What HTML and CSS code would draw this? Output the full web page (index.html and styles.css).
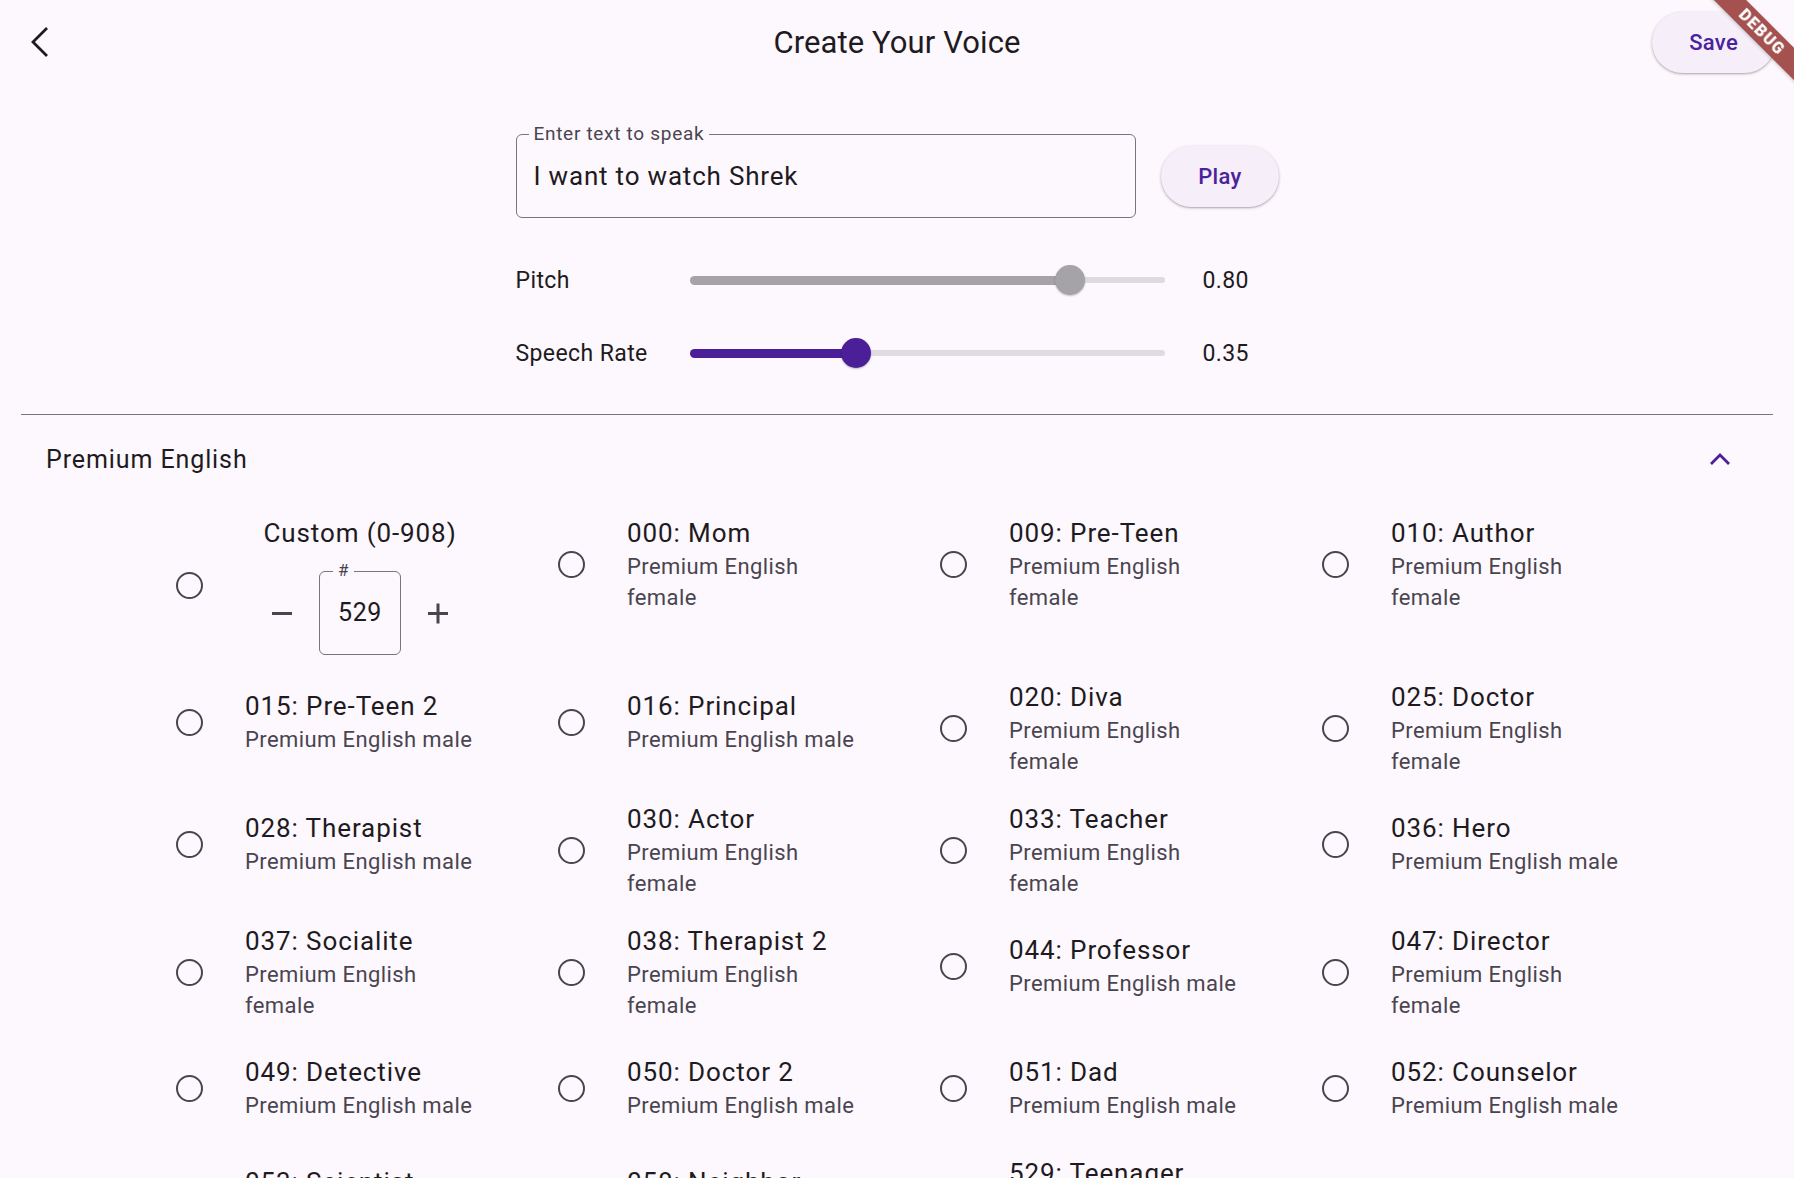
FILE: index.html
```html
<!DOCTYPE html>
<html lang="en">
  <head>
    <meta charset="UTF-8" />
    <meta name="viewport" content="width=device-width, initial-scale=1.0" />
    <title>Create Your Voice</title>
    <link rel="stylesheet" href="styles.css">
  </head>

  <body>
    <header class="appbar">
      <button class="back" aria-label="Back">
        <svg width="20" height="32" viewBox="0 0 20 32">
          <polyline points="17,2 3,16 17,30" fill="none" stroke="#1d1b20" stroke-width="2.8" />
        </svg>
      </button>
      <h1>Create Your Voice</h1>
      <div class="appbar-end">
        <button class="pill">Save</button>
      </div>
    </header>

    <div class="form">
      <div class="speak-row">
        <div class="field">
          <span class="field-label">Enter text to speak</span>
          <span class="field-value">I want to watch Shrek</span>
        </div>
        <button class="pill">Play</button>
      </div>

      <div class="slider-row">
        <span class="slider-label">Pitch</span>
        <div class="slider off">
          <div class="track">
            <div class="fill" style="width: 80%"></div>
            <div class="thumb" style="left: 80%"></div>
          </div>
        </div>
        <span class="slider-value">0.80</span>
      </div>
      <div class="slider-row">
        <span class="slider-label">Speech Rate</span>
        <div class="slider">
          <div class="track">
            <div class="fill" style="width: 35%"></div>
            <div class="thumb" style="left: 35%"></div>
          </div>
        </div>
        <span class="slider-value">0.35</span>
      </div>
    </div>

    <section class="panel">
      <div class="panel-head">
        <span>Premium English</span>
        <svg width="22" height="14" viewBox="0 0 22 14">
          <polyline points="2,12 11,3 20,12" fill="none" stroke="#4a1f98" stroke-width="2.8" />
        </svg>
      </div>

      <div class="voices">
        <div class="tile">
          <span class="radio"></span>
          <div class="custom">
            <span class="title">Custom (0-908)</span>
            <div class="stepper">
              <svg class="step" width="48" height="48" viewBox="0 0 48 48">
                <path d="M14 24.5H34" stroke="#49454f" stroke-width="3" />
              </svg>
              <div class="num">
                <span class="num-label">#</span>
                529
              </div>
              <svg class="step" width="48" height="48" viewBox="0 0 48 48">
                <path d="M14 24.5H34M24 14.5V34.5" stroke="#49454f" stroke-width="3" />
              </svg>
            </div>
          </div>
        </div>
        <div class="tile"><span class="radio"></span><div class="text"><span class="title">000: Mom</span><span class="sub">Premium English female</span></div></div>
        <div class="tile"><span class="radio"></span><div class="text"><span class="title">009: Pre-Teen</span><span class="sub">Premium English female</span></div></div>
        <div class="tile"><span class="radio"></span><div class="text"><span class="title">010: Author</span><span class="sub">Premium English female</span></div></div>

        <div class="tile"><span class="radio"></span><div class="text"><span class="title">015: Pre-Teen 2</span><span class="sub">Premium English male</span></div></div>
        <div class="tile"><span class="radio"></span><div class="text"><span class="title">016: Principal</span><span class="sub">Premium English male</span></div></div>
        <div class="tile"><span class="radio"></span><div class="text"><span class="title">020: Diva</span><span class="sub">Premium English female</span></div></div>
        <div class="tile"><span class="radio"></span><div class="text"><span class="title">025: Doctor</span><span class="sub">Premium English female</span></div></div>

        <div class="tile"><span class="radio"></span><div class="text"><span class="title">028: Therapist</span><span class="sub">Premium English male</span></div></div>
        <div class="tile"><span class="radio"></span><div class="text"><span class="title">030: Actor</span><span class="sub">Premium English female</span></div></div>
        <div class="tile"><span class="radio"></span><div class="text"><span class="title">033: Teacher</span><span class="sub">Premium English female</span></div></div>
        <div class="tile"><span class="radio"></span><div class="text"><span class="title">036: Hero</span><span class="sub">Premium English male</span></div></div>

        <div class="tile"><span class="radio"></span><div class="text"><span class="title">037: Socialite</span><span class="sub">Premium English female</span></div></div>
        <div class="tile"><span class="radio"></span><div class="text"><span class="title">038: Therapist 2</span><span class="sub">Premium English female</span></div></div>
        <div class="tile"><span class="radio"></span><div class="text"><span class="title">044: Professor</span><span class="sub">Premium English male</span></div></div>
        <div class="tile"><span class="radio"></span><div class="text"><span class="title">047: Director</span><span class="sub">Premium English female</span></div></div>

        <div class="tile"><span class="radio"></span><div class="text"><span class="title">049: Detective</span><span class="sub">Premium English male</span></div></div>
        <div class="tile"><span class="radio"></span><div class="text"><span class="title">050: Doctor 2</span><span class="sub">Premium English male</span></div></div>
        <div class="tile"><span class="radio"></span><div class="text"><span class="title">051: Dad</span><span class="sub">Premium English male</span></div></div>
        <div class="tile"><span class="radio"></span><div class="text"><span class="title">052: Counselor</span><span class="sub">Premium English male</span></div></div>

        <div class="tile"><span class="radio"></span><div class="text"><span class="title">053: Scientist</span><span class="sub">Premium English male</span></div></div>
        <div class="tile"><span class="radio"></span><div class="text"><span class="title">058: Neighbor</span><span class="sub">Premium English male</span></div></div>
        <div class="tile"><span class="radio"></span><div class="text"><span class="title">529: Teenager</span><span class="sub">Premium English female</span></div></div>
      </div>
    </section>

    <div class="debug">DEBUG</div>
  </body>
</html>
```

FILE: styles.css
```css
html,
body {
  margin: 0;
  overflow: hidden;
}

body {
  background: #fdf7fe;
  color: #1d1b20;
  font-family: Roboto, "Noto Sans", sans-serif;
}

button {
  font-family: inherit;
  border: 0;
  background: none;
  padding: 0;
  cursor: pointer;
}

/* top bar */
.appbar {
  height: 84px;
  display: grid;
  grid-template-columns: 1fr auto 1fr;
  align-items: center;
}

.back {
  margin-left: 30px;
  width: 20px;
  height: 32px;
  display: flex;
}

.appbar h1 {
  margin: 0;
  font-size: 31px;
  font-weight: 400;
  letter-spacing: 0.1px;
}

.appbar-end {
  display: flex;
  justify-content: flex-end;
  padding-right: 19px;
}

.pill {
  height: 61px;
  padding: 0 37px;
  border-radius: 31px;
  background: #f6eff9;
  color: #4a239c;
  font-size: 22px;
  font-weight: 500;
  letter-spacing: 0.3px;
  box-shadow: 0 1px 3px rgba(0, 0, 0, 0.28), 0 1px 1px rgba(0, 0, 0, 0.08);
}

/* text + sliders */
.form {
  width: 763px;
  margin: 50px auto 0;
}

.speak-row {
  display: flex;
  align-items: center;
  gap: 25px;
}

.field {
  position: relative;
  flex: 1;
  height: 84px;
  box-sizing: border-box;
  border: 1.5px solid #79747e;
  border-radius: 6px;
  display: flex;
  align-items: center;
  padding-left: 17px;
}

.field-label {
  position: absolute;
  top: -13px;
  left: 12px;
  padding: 0 5px;
  background: #fdf7fe;
  font-size: 19px;
  letter-spacing: 0.7px;
  color: #49454f;
}

.field-value {
  font-size: 26px;
  letter-spacing: 0.8px;
}

.slider-row {
  display: flex;
  align-items: center;
  height: 48px;
  margin-top: 25px;
}

.speak-row + .slider-row {
  margin-top: 38px;
}

.slider-label {
  width: 174px;
  font-size: 23px;
  letter-spacing: 0.4px;
}

.slider {
  flex: 1;
}

.track {
  position: relative;
  height: 6px;
  border-radius: 3px;
  background: #e0dbe3;
  display: flex;
  align-items: center;
}

.fill {
  height: 9px;
  border-radius: 5px;
  background: #4a1f98;
}

.thumb {
  position: absolute;
  top: 50%;
  width: 30px;
  height: 30px;
  margin: -15px 0 0 -15px;
  border-radius: 50%;
  background: #4a1f98;
  box-shadow: 0 1px 2px rgba(0, 0, 0, 0.25);
}

.off .track {
  background: #dedbe0;
}

.off .fill,
.off .thumb {
  background: #a5a2a8;
}

.slider-value {
  width: 76px;
  padding-left: 38px;
  font-size: 23px;
  letter-spacing: 0.4px;
}

/* voice list */
.panel {
  margin: 37px 21px 0;
  border-top: 1.5px solid #79747e;
}

.panel-head {
  height: 88px;
  display: flex;
  align-items: center;
  justify-content: space-between;
  padding: 0 42px 0 25px;
  font-size: 25px;
  letter-spacing: 0.9px;
}

.voices {
  display: grid;
  grid-template-columns: repeat(4, 382px);
  justify-content: center;
  align-items: start;
}

.tile {
  min-height: 110px;
  box-sizing: border-box;
  padding: 12.5px 36px 12.5px 28px;
  display: flex;
  align-items: center;
}

.radio {
  flex: none;
  width: 56px;
  height: 56px;
  margin-right: 28px;
  display: flex;
  align-items: center;
  justify-content: center;
}

.radio::before {
  content: "";
  width: 23px;
  height: 23px;
  border: 2.8px solid #49454f;
  border-radius: 50%;
}

.text {
  display: flex;
  flex-direction: column;
  max-width: 236px;
}

.title {
  font-size: 26px;
  line-height: 35px;
  letter-spacing: 0.9px;
}

.sub {
  font-size: 22px;
  line-height: 31px;
  letter-spacing: 0.4px;
  color: #49454f;
}

.custom {
  width: 230px;
  display: flex;
  flex-direction: column;
  align-items: center;
}

.stepper {
  margin-top: 20px;
  display: flex;
  align-items: center;
  gap: 13px;
}

.step {
  flex: none;
}

.num {
  position: relative;
  width: 82px;
  height: 84px;
  box-sizing: border-box;
  border: 1.5px solid #79747e;
  border-radius: 6px;
  display: flex;
  align-items: center;
  justify-content: center;
  font-size: 25px;
  letter-spacing: 0.6px;
}

.num-label {
  position: absolute;
  top: -12px;
  left: 13px;
  padding: 0 5px;
  background: #fdf7fe;
  font-size: 17px;
  color: #49454f;
}

/* debug ribbon */
.debug {
  position: fixed;
  top: 32px;
  right: 32px;
  width: 200px;
  height: 23px;
  transform: translate(50%, -50%) rotate(45deg);
  background: #a4514f;
  color: #fff;
  font-size: 16px;
  font-weight: 900;
  letter-spacing: 1.3px;
  line-height: 23px;
  text-align: center;
  box-shadow: 0 1px 3px rgba(0, 0, 0, 0.2);
}
```
